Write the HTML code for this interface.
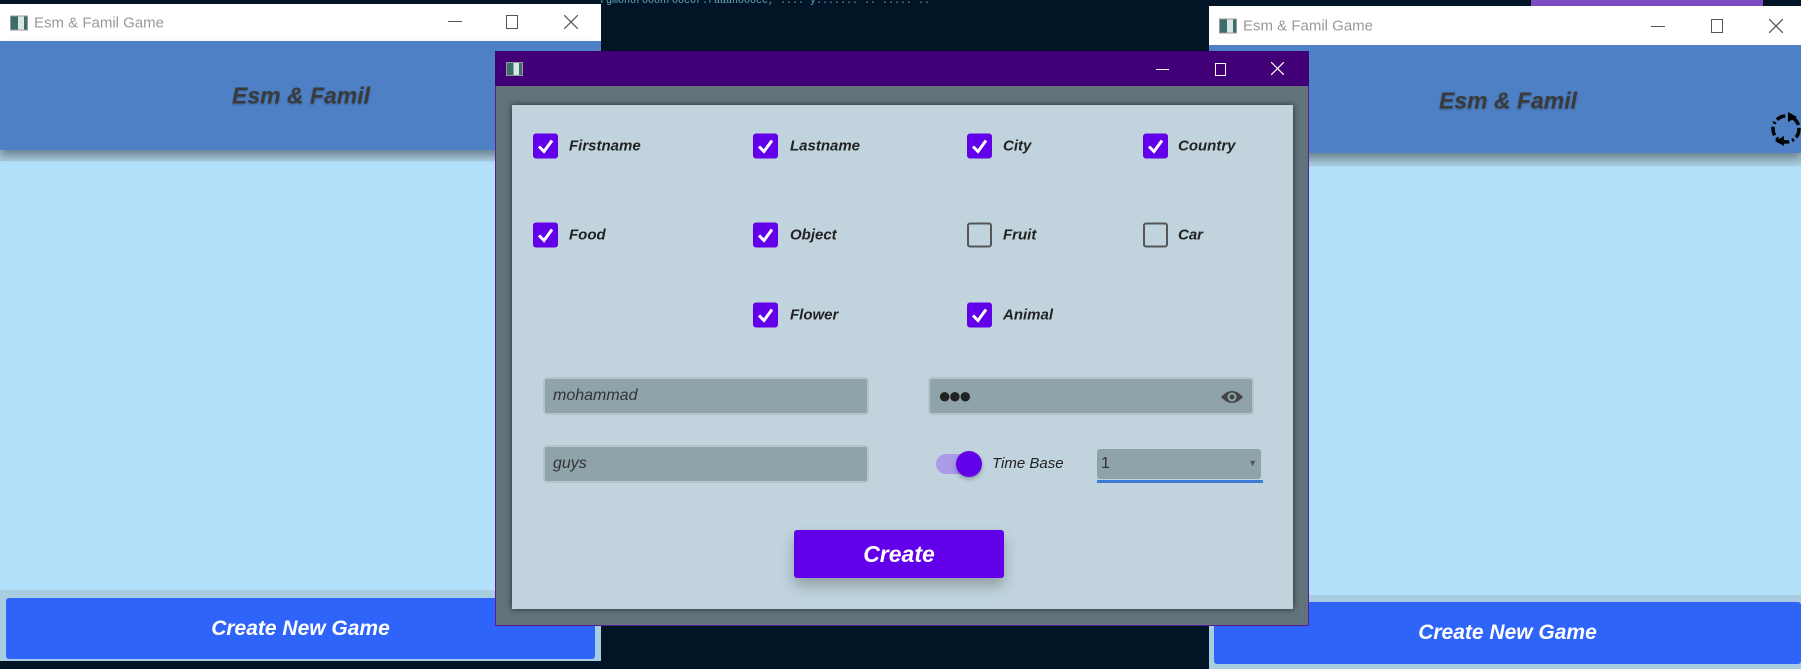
<!DOCTYPE html>
<html><head><meta charset="utf-8"><style>
*{margin:0;padding:0;box-sizing:border-box}
body{width:1801px;height:669px;overflow:hidden;background:#021526;font-family:"Liberation Sans",sans-serif;position:relative}
.abs{position:absolute}
.tb{background:#fff;color:#999;font-size:15px}
.tb .t{position:absolute;left:34px;top:50%;transform:translateY(-50%)}
.ico{position:absolute;left:10px;top:50%;transform:translateY(-50%);width:18px;height:15px;border:1px solid #999;background:linear-gradient(90deg,#3b6d6a 0 45%,#d9e6e6 45% 80%,#3b6d6a 80%)}
.hdr{background:#4e80c6;box-shadow:0 6px 8px rgba(0,0,0,.35)}
.ht{position:absolute;font-weight:bold;font-style:italic;font-size:23px;color:#3a3a3a;text-shadow:0 1px 2px rgba(0,0,0,.3);transform:translate(-50%,-50%);white-space:nowrap}
.btn{background:#2f64fa;color:#fff;font-weight:bold;font-style:italic;font-size:21px;display:flex;align-items:center;justify-content:center;border-radius:3px}
.cb{position:absolute;width:25px;height:25px;border-radius:3px;background:#6200ea;transform:translateY(-50%)}
.cb.off{background:transparent;border:2px solid #555}
.cb svg{position:absolute;left:3px;top:3px}
.lb{position:absolute;font-weight:bold;font-style:italic;font-size:15px;color:#222;transform:translateY(-50%)}
.inp{position:absolute;background:#8fa3aa;border:2px solid #b6c3c9;border-radius:4px;font-style:italic;font-size:16px;color:#333;padding-left:8px;display:flex;align-items:center}
</style></head><body>
<div class="abs" style="left:600px;top:0;width:520px;height:8px;color:#6ab;font:10px 'Liberation Mono',monospace;overflow:hidden;line-height:4px">rgmonorooonroocor.raaanooocc,  ....  y.......  ..  .....  ..</div>
<div class="abs" style="left:1531px;top:0;width:232px;height:6px;background:#7a4cc0"></div>

<!-- left window -->
<div class="abs tb" style="left:0;top:4px;width:601px;height:37px"><div class="ico"></div><span class="t">Esm &amp; Famil Game</span>
<span class="abs" style="left:448px;top:17px;width:14px;border-top:1px solid #555"></span>
<span class="abs" style="left:506px;top:11px;width:12px;height:14px;border:1px solid #555"></span>
<svg class="abs" style="left:564px;top:11px" width="14" height="14"><path d="M0 0L14 14M14 0L0 14" stroke="#555" stroke-width="1.2"/></svg></div>
<div class="abs" style="left:0;top:41px;width:601px;height:628px;background:#a9cde0"></div>
<div class="abs" style="left:0;top:161px;width:601px;height:429px;background:#b3e0fa"></div>
<div class="abs hdr" style="left:0;top:41px;width:601px;height:109px"></div>
<div class="ht" style="left:301px;top:96px">Esm &amp; Famil</div>
<div class="abs btn" style="left:6px;top:598px;width:589px;height:61px">Create New Game</div>
<div class="abs" style="left:0;top:661px;width:601px;height:8px;background:#021526"></div>

<!-- right window -->
<div class="abs tb" style="left:1209px;top:6px;width:592px;height:39px"><div class="ico"></div><span class="t">Esm &amp; Famil Game</span>
<span class="abs" style="left:442px;top:20px;width:14px;border-top:1px solid #555"></span>
<span class="abs" style="left:502px;top:13px;width:12px;height:14px;border:1px solid #555"></span>
<svg class="abs" style="left:560px;top:13px" width="14" height="14"><path d="M0 0L14 14M14 0L0 14" stroke="#555" stroke-width="1.2"/></svg></div>
<div class="abs" style="left:1209px;top:45px;width:592px;height:624px;background:#a9cde0"></div>
<div class="abs" style="left:1209px;top:166px;width:592px;height:429px;background:#b3e0fa"></div>
<div class="abs hdr" style="left:1209px;top:45px;width:592px;height:108px"></div>
<div class="ht" style="left:1508px;top:101px">Esm &amp; Famil</div>
<svg class="abs" style="left:1768px;top:110px" width="36" height="38" viewBox="0 0 36 38"><circle cx="18" cy="19" r="13" fill="none" stroke="#000" stroke-width="3.5" stroke-dasharray="9 3 2 3"/><path d="M20 2 L29 7 L20 12Z" fill="#000"/><path d="M16 26 L7 31 L16 36Z" fill="#000"/></svg>
<div class="abs btn" style="left:1214px;top:602px;width:587px;height:62px">Create New Game</div>

<!-- dialog -->
<div class="abs" style="left:495px;top:51px;width:814px;height:575px;background:#62737b;border:1px solid #5a1a9a"></div>
<div class="abs" style="left:495px;top:51px;width:814px;height:35px;background:#420078"></div>
<div class="abs ico" style="left:506px;top:69px;width:17px;height:14px"></div>
<span class="abs" style="left:1156px;top:69px;width:13px;border-top:1px solid #fff"></span>
<span class="abs" style="left:1215px;top:63px;width:11px;height:13px;border:1px solid #fff"></span>
<svg class="abs" style="left:1271px;top:62px" width="13" height="13"><path d="M0 0L13 13M13 0L0 13" stroke="#fff" stroke-width="1.2"/></svg>
<div class="abs" style="left:512px;top:105px;width:781px;height:504px;background:#c1d4de;box-shadow:0 0 6px rgba(0,0,0,.6)"></div>

<div class="cb" style="left:533px;top:146px"><svg width="19" height="19" viewBox="0 0 19 19"><path d="M3 10 L8 15 L16 4" stroke="#fff" stroke-width="3" fill="none"/></svg></div><div class="lb" style="left:569px;top:146px">Firstname</div>
<div class="cb" style="left:753px;top:146px"><svg width="19" height="19" viewBox="0 0 19 19"><path d="M3 10 L8 15 L16 4" stroke="#fff" stroke-width="3" fill="none"/></svg></div><div class="lb" style="left:790px;top:146px">Lastname</div>
<div class="cb" style="left:967px;top:146px"><svg width="19" height="19" viewBox="0 0 19 19"><path d="M3 10 L8 15 L16 4" stroke="#fff" stroke-width="3" fill="none"/></svg></div><div class="lb" style="left:1003px;top:146px">City</div>
<div class="cb" style="left:1143px;top:146px"><svg width="19" height="19" viewBox="0 0 19 19"><path d="M3 10 L8 15 L16 4" stroke="#fff" stroke-width="3" fill="none"/></svg></div><div class="lb" style="left:1178px;top:146px">Country</div>

<div class="cb" style="left:533px;top:235px"><svg width="19" height="19" viewBox="0 0 19 19"><path d="M3 10 L8 15 L16 4" stroke="#fff" stroke-width="3" fill="none"/></svg></div><div class="lb" style="left:569px;top:235px">Food</div>
<div class="cb" style="left:753px;top:235px"><svg width="19" height="19" viewBox="0 0 19 19"><path d="M3 10 L8 15 L16 4" stroke="#fff" stroke-width="3" fill="none"/></svg></div><div class="lb" style="left:790px;top:235px">Object</div>
<div class="cb off" style="left:967px;top:235px"></div><div class="lb" style="left:1003px;top:235px">Fruit</div>
<div class="cb off" style="left:1143px;top:235px"></div><div class="lb" style="left:1178px;top:235px">Car</div>

<div class="cb" style="left:753px;top:315px"><svg width="19" height="19" viewBox="0 0 19 19"><path d="M3 10 L8 15 L16 4" stroke="#fff" stroke-width="3" fill="none"/></svg></div><div class="lb" style="left:790px;top:315px">Flower</div>
<div class="cb" style="left:967px;top:315px"><svg width="19" height="19" viewBox="0 0 19 19"><path d="M3 10 L8 15 L16 4" stroke="#fff" stroke-width="3" fill="none"/></svg></div><div class="lb" style="left:1003px;top:315px">Animal</div>

<div class="inp" style="left:543px;top:377px;width:326px;height:38px">mohammad</div>
<div class="inp" style="left:928px;top:377px;width:326px;height:38px;font-style:normal;font-size:22px;letter-spacing:-3px;color:#222">●●●
<svg class="abs" style="left:290px;top:9px" width="24" height="18" viewBox="0 0 24 18"><path d="M1 9 Q12 -3 23 9 Q12 21 1 9Z" fill="#444"/><circle cx="12" cy="9" r="4.5" fill="#8fa3aa"/><circle cx="12" cy="9" r="2.5" fill="#444"/></svg></div>
<div class="inp" style="left:543px;top:445px;width:326px;height:38px">guys</div>

<div class="abs" style="left:936px;top:454px;width:40px;height:20px;border-radius:10px;background:#a99be6"></div>
<div class="abs" style="left:956px;top:451px;width:26px;height:26px;border-radius:50%;background:#6200ea;box-shadow:0 2px 4px rgba(0,0,0,.3)"></div>
<div class="abs" style="left:992px;top:455px;font-style:italic;font-size:15px;color:#222">Time Base</div>
<div class="abs" style="left:1097px;top:449px;width:164px;height:30px;background:#8fa3aa;border-radius:3px;font-size:16px;color:#333;padding:6px 4px">1<span class="abs" style="right:4px;top:9px;font-size:9px;color:#555">▼</span></div>
<div class="abs" style="left:1097px;top:480px;width:166px;height:3px;background:#3a7bd5"></div>

<div class="abs btn" style="left:794px;top:530px;width:210px;height:48px;background:#6200ea;font-size:23px;box-shadow:0 8px 14px rgba(0,0,0,.25)">Create</div>
</body></html>
